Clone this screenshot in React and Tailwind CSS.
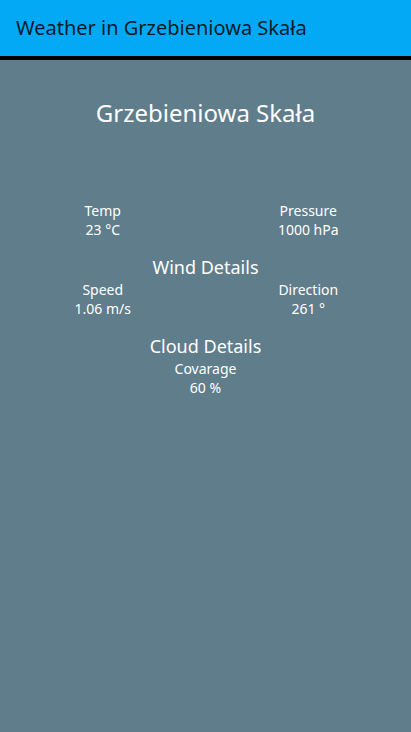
export default function App() {
  return (
    <div className="min-h-[732px] bg-[#607d8b] text-white" style={{ fontFamily: '"Noto Sans", "Open Sans", sans-serif' }}>
      <header className="h-[60px] bg-[#03a9f4] border-b-4 border-black flex items-center px-4">
        <h1 className="text-[20px] leading-[28px] text-black/85">Weather in Grzebieniowa Skała</h1>
      </header>

      <main className="flex flex-col items-center">
        <h2 className="mt-[37px] text-[24px] leading-[32px]">Grzebieniowa Skała</h2>

        <div className="mt-[72px] w-full grid grid-cols-2 text-center text-[14px] leading-[19px]">
          <div>
            <div>Temp</div>
            <div>23 °C</div>
          </div>
          <div>
            <div>Pressure</div>
            <div>1000 hPa</div>
          </div>
        </div>

        <h3 className="mt-[16px] text-[18px] leading-[25px]">Wind Details</h3>
        <div className="w-full grid grid-cols-2 text-center text-[14px] leading-[19px]">
          <div>
            <div>Speed</div>
            <div>1.06 m/s</div>
          </div>
          <div>
            <div>Direction</div>
            <div>261 °</div>
          </div>
        </div>

        <h3 className="mt-[16px] text-[18px] leading-[25px]">Cloud Details</h3>
        <div className="text-center text-[14px] leading-[19px]">
          <div>Covarage</div>
          <div>60 %</div>
        </div>
      </main>
    </div>
  );
}
